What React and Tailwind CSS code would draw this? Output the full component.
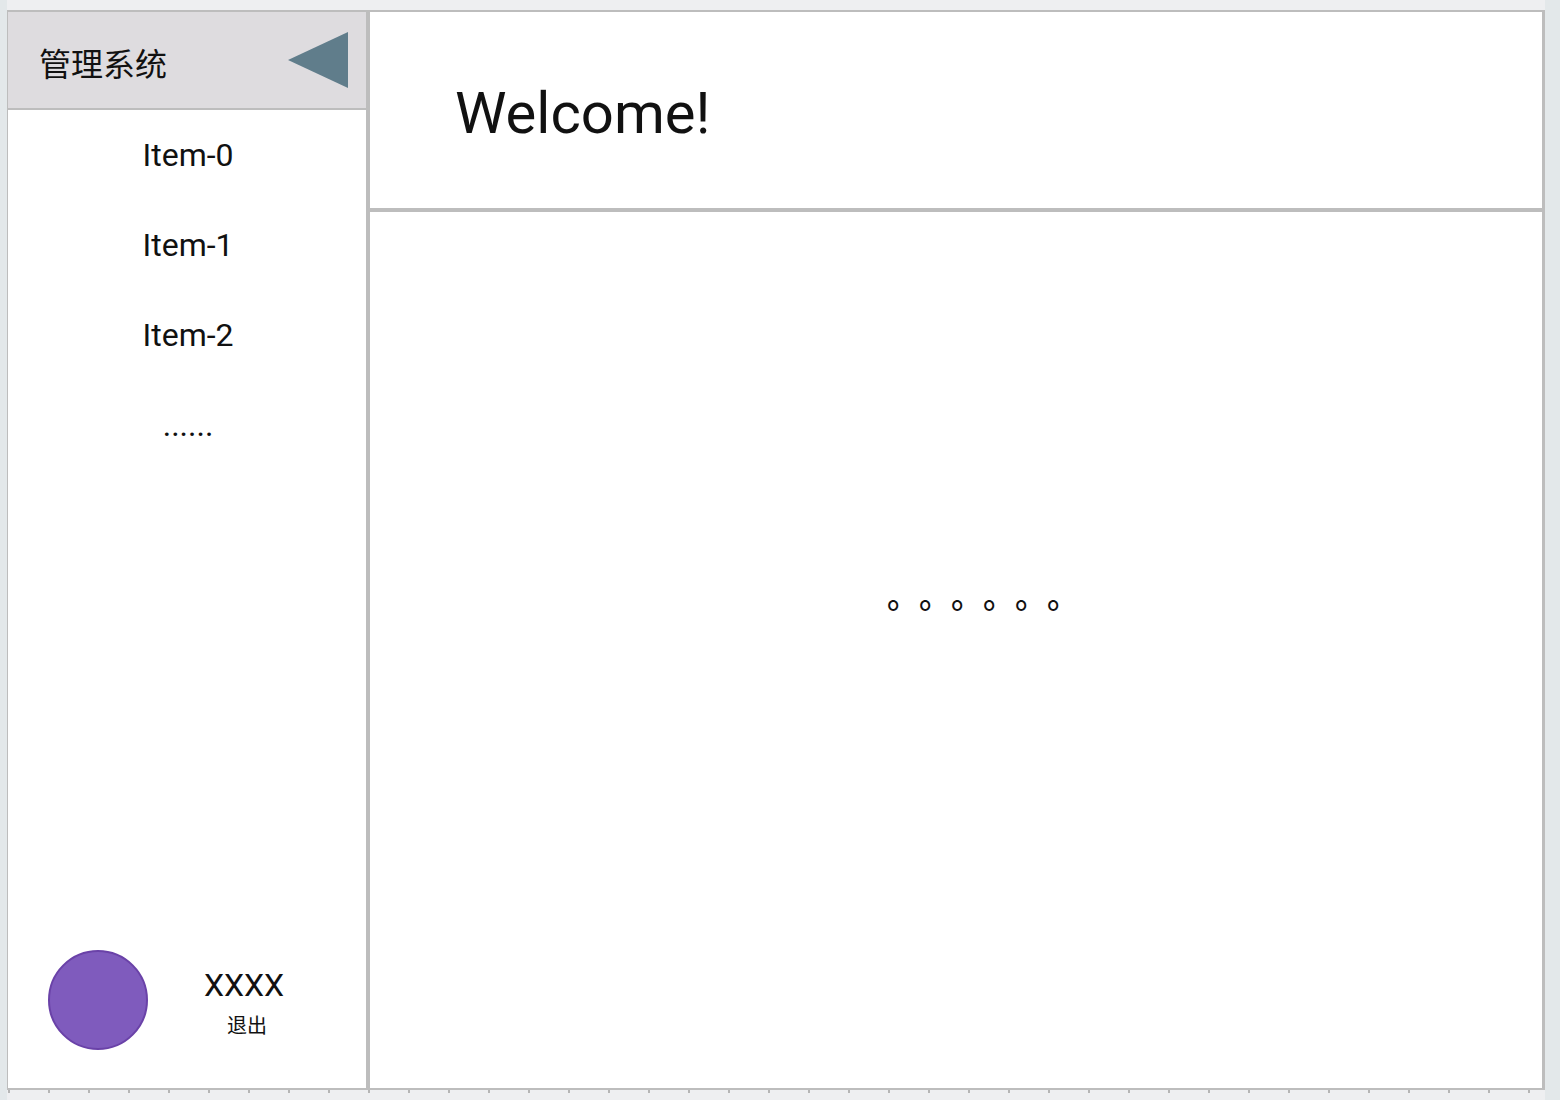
const font = { fontFamily: 'Roboto, "Noto Sans CJK SC", sans-serif' };
const ticks = Array.from({ length: 39 }, (_, i) => i);

export default function App() {
  return (
    <div style={font} className="flex h-[1100px] w-[1560px] overflow-hidden bg-[#e3e8ea] text-[#111]">
      <div className="w-[7px] shrink-0" />
      <div className="flex w-[1538px] shrink-0 flex-col bg-[#eeeff1]">
        <div className="h-[10px] shrink-0" />
        <div className="flex h-[1080px] shrink-0 border-y-2 border-r-[3px] border-l border-[#bdbdbd] bg-white">
          <aside className="flex w-[358px] shrink-0 flex-col">
            <div className="flex h-[98px] shrink-0 items-center justify-between border-b-2 border-[#bdbdbd] bg-[#dedcdf] pr-[18px] pl-[31px]">
              <span className="pt-[10px] text-[32px] leading-none">管理系统</span>
              <svg width="60" height="56" viewBox="0 0 60 56" aria-hidden="true">
                <polygon points="0,28 60,0 60,56" fill="#607d8b" />
              </svg>
            </div>
            <nav className="flex flex-col pl-[2px] text-[32px]">
              {["Item-0", "Item-1", "Item-2", "......"].map((t) => (
                <div key={t} className="flex h-[90px] items-center justify-center">{t}</div>
              ))}
            </nav>
            <div className="mt-auto flex items-center pb-[38px] pl-10">
              <div className="h-[100px] w-[100px] rounded-full border-2 border-[#6a42a8] bg-[#7f5bbd]" />
              <div className="ml-[56px] flex w-[80px] flex-col items-center pt-[1px]">
                <span className="text-[32px] leading-[42px]">XXXX</span>
                <span className="mt-[8px] pl-[6px] text-[20px] leading-6">退出</span>
              </div>
            </div>
          </aside>
          <div className="w-1 shrink-0 bg-[#bdbdbd]" />
          <main className="flex min-w-0 flex-1 flex-col">
            <div className="flex h-[200px] shrink-0 items-center border-b-4 border-[#bdbdbd] pt-[6px] pl-[85px]">
              <h1 className="text-[58px] leading-none font-normal">Welcome!</h1>
            </div>
            <div className="flex-1 pt-[361px] pl-[517px] text-[32px] font-medium [text-spacing-trim:space-all]">
              <span>。。。。。。</span>
            </div>
          </main>
        </div>
        <div className="flex h-[10px] shrink-0 pl-[1px]">
          {ticks.map((i) => (
            <div key={i} className="w-[40px] shrink-0">
              <div className="h-[3px] w-[2px] bg-[#b5b5b5]" />
            </div>
          ))}
        </div>
      </div>
    </div>
  );
}
